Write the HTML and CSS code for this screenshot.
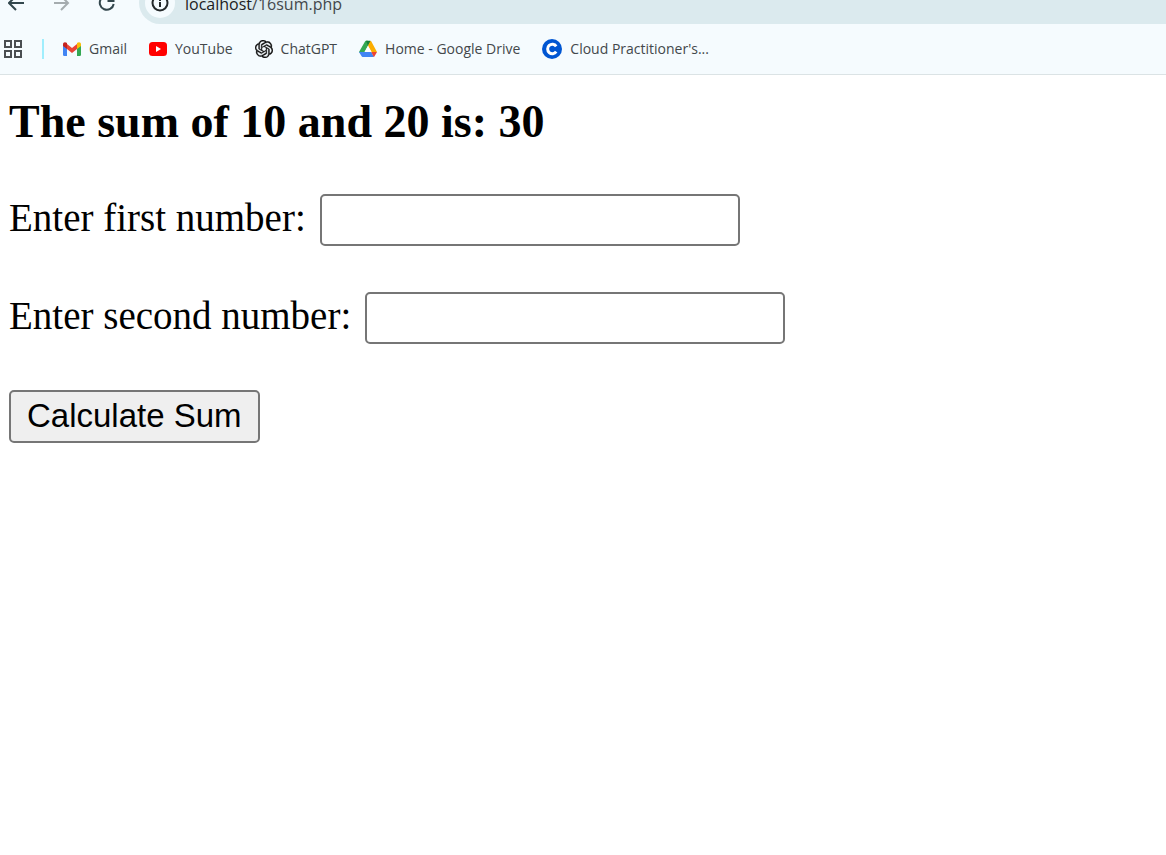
FILE: index.html
```html
<!DOCTYPE html>
<html lang="en">
<head>
<meta charset="utf-8">
<title>localhost/16sum.php</title>
<link rel="stylesheet" href="styles.css">
</head>
<body>
<header class="browser">
  <div class="toolbar">
    <button class="nav-button" type="button" aria-label="Back">
      <svg width="18" height="18" viewBox="0 0 18 18" fill="none" stroke="#33474d" stroke-width="2"><path d="M16 9H2M8 2L1 9l7 7"/></svg>
    </button>
    <button class="nav-button nav-button-off" type="button" aria-label="Forward" disabled>
      <svg width="18" height="18" viewBox="0 0 18 18" fill="none" stroke="#a5acaf" stroke-width="2"><path d="M1 9h14M8 2l7 7-7 7"/></svg>
    </button>
    <button class="nav-button" type="button" aria-label="Reload">
      <svg width="18" height="18" viewBox="0 0 18 18" fill="none" stroke="#33474d" stroke-width="2"><path d="M15.700 10A7 7 0 1 1 14 4.100L15.500 6M15.500 1v6h-6"/></svg>
    </button>
    <div class="address">
      <button class="site-info" type="button" aria-label="Site information">
        <svg width="18" height="18" viewBox="0 0 18 18" fill="none" stroke="#24292b" stroke-width="2"><circle cx="9" cy="9" r="7.500"/><path d="M9 8v5M9 5v2"/></svg>
      </button>
      <span class="url"><span class="host">localhost</span>/16sum.php</span>
    </div>
  </div>
  <nav class="bookmarks" aria-label="Bookmarks">
    <button class="apps" type="button" aria-label="Apps">
      <svg width="20" height="20" viewBox="0 0 20 20" fill="none" stroke="#4a4e51" stroke-width="2"><path d="M2 2h6v6H2zM12 2h6v6h-6zM2 12h6v6H2zM12 12h6v6h-6z"/></svg>
    </button>
    <span class="divider"></span>
    <a class="bookmark" href="#">
      <svg width="18" height="18" viewBox="0 0 18 18"><path d="M0 5l4 3v8H1.200Q0 16 0 14.800z" fill="#4285f4"/><path d="M18 5l-4 3v8h2.800q1.200 0 1.200-1.200z" fill="#34a853"/><path d="M4 4l5 4 5-4v5l-5 4-5-4z" fill="#ea4335"/><path d="M0 4.500C0 2 2.300 1.700 4 3v6L0 6z" fill="#c5221f"/><path d="M18 4.500C18 2 15.700 1.700 14 3v6l4-3z" fill="#fbbc04"/></svg>
      Gmail</a>
    <a class="bookmark" href="#">
      <svg width="18" height="18" viewBox="0 0 18 18"><rect y="2" width="18" height="14" rx="3.500" fill="#f00"/><path d="M7 6l5 3-5 3z" fill="#fff"/></svg>
      YouTube</a>
    <a class="bookmark" href="#">
      <svg width="18" height="18" viewBox="0 0 24 24" fill="#111" stroke="#111" stroke-width=".4"><path d="M22.2819 9.8211a5.9847 5.9847 0 0 0-.5157-4.9108 6.0462 6.0462 0 0 0-6.5098-2.9A6.0651 6.0651 0 0 0 4.9807 4.1818a5.9847 5.9847 0 0 0-3.9977 2.9 6.0462 6.0462 0 0 0 .7427 7.0966 5.98 5.98 0 0 0 .511 4.9107 6.051 6.051 0 0 0 6.5146 2.9001A5.9847 5.9847 0 0 0 13.2599 24a6.0557 6.0557 0 0 0 5.7718-4.2058 5.9894 5.9894 0 0 0 3.9977-2.9001 6.0557 6.0557 0 0 0-.7475-7.0729zm-9.022 12.6081a4.4755 4.4755 0 0 1-2.8764-1.0408l.1419-.0804 4.7783-2.7582a.7948.7948 0 0 0 .3927-.6813v-6.7369l2.02 1.1686a.071.071 0 0 1 .038.052v5.5826a4.504 4.504 0 0 1-4.4945 4.4944zm-9.6607-4.1254a4.4708 4.4708 0 0 1-.5346-3.0137l.142.0852 4.783 2.7582a.7712.7712 0 0 0 .7806 0l5.8428-3.3685v2.3324a.0804.0804 0 0 1-.0332.0615L9.74 19.9502a4.4992 4.4992 0 0 1-6.1408-1.6464zM2.3408 7.8956a4.485 4.485 0 0 1 2.3655-1.9728V11.6a.7664.7664 0 0 0 .3879.6765l5.8144 3.3543-2.0201 1.1685a.0757.0757 0 0 1-.071 0l-4.8303-2.7865A4.504 4.504 0 0 1 2.3408 7.872zm16.5963 3.8558L13.1038 8.364 15.1192 7.2a.0757.0757 0 0 1 .071 0l4.8303 2.7913a4.4944 4.4944 0 0 1-.6765 8.1042v-5.6772a.79.79 0 0 0-.407-.667zm2.0107-3.0231l-.142-.0852-4.7735-2.7818a.7759.7759 0 0 0-.7854 0L9.409 9.2297V6.8974a.0662.0662 0 0 1 .0284-.0615l4.8303-2.7866a4.4992 4.4992 0 0 1 6.6802 4.66zM8.3065 12.863l-2.02-1.1638a.0804.0804 0 0 1-.038-.0567V6.0742a4.4992 4.4992 0 0 1 7.3757-3.4537l-.142.0805L8.704 5.459a.7948.7948 0 0 0-.3927.6813zm1.0976-2.3654l2.602-1.4998 2.6069 1.4998v2.9994l-2.5974 1.4997-2.6067-1.4997Z"/></svg>
      ChatGPT</a>
    <a class="bookmark" href="#">
      <svg width="18" height="18" viewBox="0 0 18 18"><path d="M6 1.500Q6.400.700 7 .700h2L9 5.700 3.700 15.500 0 12z" fill="#34a853"/><path d="M7 .700h4Q11.700.700 12 1.200L9 6z" fill="#188038"/><path d="M9 5.700L11.500.700q.400 0 .700.600L18 12h-5.500z" fill="#fbad00"/><path d="M0 12h12.300l2.700 5H3.500Q3 17 2.600 16.300z" fill="#4285f4"/><path d="M12.300 12H18l-2.600 4.400q-.200.400-.600.600z" fill="#ea4335"/><path d="M9 5.700l3.500 6.300h-7z" fill="#fff"/></svg>
      Home - Google Drive</a>
    <a class="bookmark" href="#">
      <svg width="20" height="20" viewBox="0 0 20 20"><circle cx="10" cy="10" r="10" fill="#0056d2"/><path d="M14.200 7.300A4.700 4.700 0 1 0 14.200 12.700" fill="none" stroke="#fff" stroke-width="3"/></svg>
      Cloud Practitioner's...</a>
  </nav>
</header>
<main class="page">
  <h1 class="result">The sum of 10 and 20 is: 30</h1>
  <form class="sum-form">
    <div class="field">
      <label for="first">Enter first number:</label>
      <input id="first" name="num1" type="text">
    </div>
    <div class="field">
      <label for="second">Enter second number:</label>
      <input id="second" name="num2" type="text">
    </div>
    <button class="submit" type="button">Calculate Sum</button>
  </form>
</main>
</body>
</html>
```
FILE: styles.css
```css
* {
  box-sizing: border-box;
}

body {
  margin: 0;
  background: #fff;
  color: #000;
  font-family: "Liberation Serif", "Times New Roman", serif;
}

.browser {
  background: #f5fbfe;
  border-bottom: 1px solid #dbe3e5;
  font-family: "Open Sans", "Noto Sans", sans-serif;
  color: #43484b;
}

.browser button {
  display: flex;
  align-items: center;
  justify-content: center;
  padding: 0;
  border: 0;
  background: none;
}

.toolbar {
  display: flex;
  align-items: flex-end;
  gap: 27px;
  height: 24px;
  padding-left: 8px;
  overflow: hidden;
}

.nav-button {
  flex: none;
  width: 18px;
  height: 42px;
}

.address {
  display: flex;
  flex: 1;
  align-items: center;
  gap: 10px;
  height: 42px;
  margin-left: -4px;
  padding-left: 6px;
  border-radius: 21px 0 0 21px;
  background: #dbeaee;
}

.browser .site-info {
  width: 30px;
  height: 30px;
  border-radius: 50%;
  background: #f5fbfe;
}

.url {
  padding-top: 2px;
  font-size: 16px;
  line-height: 24px;
}

.host {
  color: #1c2022;
}

.bookmarks {
  display: flex;
  align-items: center;
  gap: 22px;
  height: 50px;
  padding-left: 3px;
  font-size: 14px;
  line-height: 20px;
  white-space: nowrap;
}

.divider {
  width: 2px;
  height: 20px;
  margin: 0 -3px;
  background: #a0eefd;
}

.bookmark {
  display: flex;
  align-items: center;
  gap: 8px;
  color: inherit;
  text-decoration: none;
}

.page {
  padding: 21px 10px 21px 9px;
}

.result {
  margin: 0 0 46px;
  font-size: 46px;
  line-height: 52px;
}

.sum-form {
  display: flex;
  flex-direction: column;
  align-items: flex-start;
  gap: 46px;
  font-size: 39px;
  line-height: 48px;
}

.field {
  display: flex;
  flex-wrap: wrap;
  gap: 14px;
  max-width: 100%;
}

.field input {
  width: 420px;
  max-width: 100%;
  height: 52px;
  padding: 2px 5px;
  border: 2px solid #767676;
  border-radius: 5px;
  font: 33px "Liberation Sans", Arial, sans-serif;
}

.submit {
  padding: 5px 16px 6px;
  border: 2px solid #767676;
  border-radius: 5px;
  background: #efefef;
  color: #000;
  font: 33px/38px "Liberation Sans", Arial, sans-serif;
}
```
